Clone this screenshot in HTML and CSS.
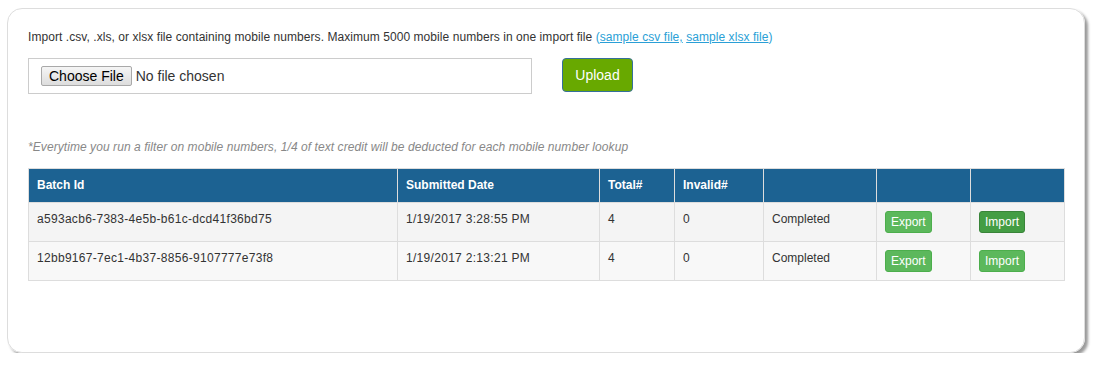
FILE: index.html
```html
<!DOCTYPE html>
<html lang="en">
<head>
  <meta charset="UTF-8">
  <meta name="viewport" content="width=device-width, initial-scale=1.0">
  <link rel="stylesheet" href="styles.css">
</head>
<body>
  <div class="card">
    <p class="intro">
      Import .csv, .xls, or xlsx file containing mobile numbers. Maximum 5000 mobile numbers in one import file
      <span class="samples">(<a href="#">sample csv file,</a> <a href="#">sample xlsx file</a>)</span>
    </p>

    <div class="upload-row">
      <input type="file" class="file-input">
      <button class="btn-upload">Upload</button>
    </div>

    <p class="note">*Everytime you run a filter on mobile numbers, 1/4 of text credit will be deducted for each mobile number lookup</p>

    <table class="batch-table">
      <colgroup>
        <col style="width: 369px">
        <col style="width: 202px">
        <col style="width: 75px">
        <col style="width: 89px">
        <col style="width: 113px">
        <col style="width: 94px">
        <col style="width: 94px">
      </colgroup>
      <thead>
        <tr>
          <th>Batch Id</th>
          <th>Submitted Date</th>
          <th>Total#</th>
          <th>Invalid#</th>
          <th></th>
          <th></th>
          <th></th>
        </tr>
      </thead>
      <tbody>
        <tr>
          <td class="num">a593acb6-7383-4e5b-b61c-dcd41f36bd75</td>
          <td class="num">1/19/2017 3:28:55 PM</td>
          <td>4</td>
          <td>0</td>
          <td>Completed</td>
          <td><button class="btn-xs">Export</button></td>
          <td><button class="btn-xs active">Import</button></td>
        </tr>
        <tr>
          <td class="num">12bb9167-7ec1-4b37-8856-9107777e73f8</td>
          <td class="num">1/19/2017 2:13:21 PM</td>
          <td>4</td>
          <td>0</td>
          <td>Completed</td>
          <td><button class="btn-xs">Export</button></td>
          <td><button class="btn-xs">Import</button></td>
        </tr>
      </tbody>
    </table>
  </div>
</body>
</html>
```

FILE: styles.css
```css
body {
  margin: 0;
  font-family: "Liberation Sans", Arial, sans-serif;
  color: #333;
  background: #fff;
}

.card {
  box-sizing: border-box;
  width: 1078px;
  height: 345px;
  margin: 8px 0 0 7px;
  padding: 20px 19px 0 20px;
  border: 1px solid #ddd;
  border-radius: 15px;
  box-shadow: 3px 3px 3px rgba(0, 0, 0, 0.4);
}

.intro {
  margin: 0;
  font-size: 12px;
  line-height: 17px;
  letter-spacing: 0.06px;
}

.samples {
  color: #2a9fd6;
}

.samples a {
  color: #2a9fd6;
  text-decoration: underline;
}

.upload-row {
  display: flex;
  align-items: flex-start;
  gap: 30px;
  margin-top: 12px;
}

.file-input {
  box-sizing: border-box;
  width: 504px;
  height: 36px;
  padding: 7px 12px;
  border: 1px solid #ccc;
  font-family: "Liberation Sans", Arial, sans-serif;
  font-size: 14px;
  color: #333;
  background: #fff;
}

.file-input::file-selector-button {
  font-family: "Liberation Sans", Arial, sans-serif;
  font-size: 14px;
  color: #000;
  padding: 1px 7px;
  margin-right: 4px;
  border: 1px solid #a9a9a9;
  border-radius: 2px;
  background: linear-gradient(#f5f5f5, #dddddd);
}

.btn-upload {
  box-sizing: border-box;
  width: 71px;
  height: 34px;
  border: 1px solid #35709a;
  border-radius: 4px;
  background-color: #68a900;
  color: #fff;
  font-family: "Liberation Sans", Arial, sans-serif;
  font-size: 14px;
}

.note {
  margin: 45px 0 0;
  font-size: 12px;
  line-height: 17px;
  font-style: italic;
  letter-spacing: 0.07px;
  color: #888;
}

.batch-table {
  width: 1037px;
  margin-top: 12px;
  border-collapse: collapse;
  table-layout: fixed;
  font-size: 12px;
}

.batch-table th,
.batch-table td {
  border: 1px solid #ddd;
  padding: 8px;
  line-height: 17px;
  text-align: left;
  vertical-align: top;
}

.batch-table td.num {
  letter-spacing: 0.3px;
}

.batch-table th {
  background-color: #1c6292;
  color: #fff;
  font-weight: bold;
}

.batch-table tbody tr:nth-child(odd) td {
  background-color: #f4f4f4;
}

.batch-table tbody tr:nth-child(even) td {
  background-color: #f8f8f8;
}

.btn-xs {
  display: block;
  padding: 1px 5px;
  font-family: "Liberation Sans", Arial, sans-serif;
  font-size: 12px;
  line-height: 18px;
  color: #fff;
  background-color: #5cb85c;
  border: 1px solid #4cae4c;
  border-radius: 3px;
}

.btn-xs.active {
  background-color: #449d44;
  border-color: #398439;
}
```
